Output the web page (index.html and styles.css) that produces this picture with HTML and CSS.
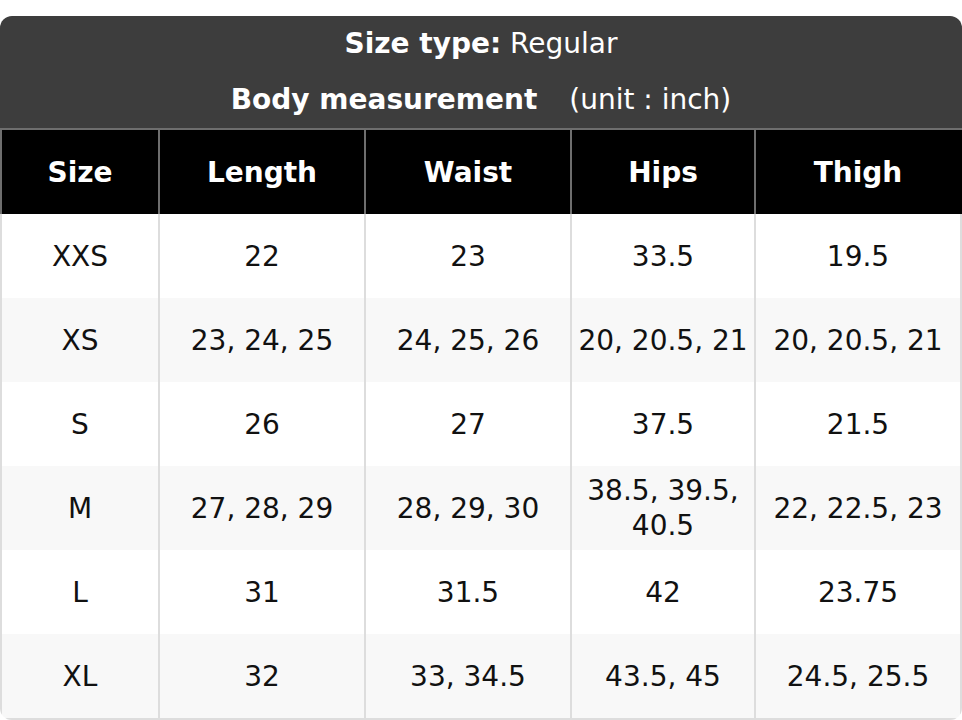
FILE: index.html
```html
<!DOCTYPE html>
<html>
<head>
<meta charset="utf-8">
<link rel="stylesheet" href="styles.css">
</head>
<body>
<div class="chart">
  <div class="caption">
    <div class="cap-line"><b>Size type:</b> Regular</div>
    <div class="cap-line"><b>Body measurement</b><span class="unit">(unit : inch)</span></div>
  </div>
  <table class="sizes">
    <colgroup>
      <col class="c-size"><col class="c-len"><col class="c-waist"><col class="c-hips"><col class="c-thigh">
    </colgroup>
    <thead>
      <tr><th>Size</th><th>Length</th><th>Waist</th><th>Hips</th><th>Thigh</th></tr>
    </thead>
    <tbody>
      <tr><td>XXS</td><td>22</td><td>23</td><td>33.5</td><td>19.5</td></tr>
      <tr><td>XS</td><td>23, 24, 25</td><td>24, 25, 26</td><td>20, 20.5, 21</td><td>20, 20.5, 21</td></tr>
      <tr><td>S</td><td>26</td><td>27</td><td>37.5</td><td>21.5</td></tr>
      <tr><td>M</td><td>27, 28, 29</td><td>28, 29, 30</td><td>38.5, 39.5, 40.5</td><td>22, 22.5, 23</td></tr>
      <tr><td>L</td><td>31</td><td>31.5</td><td>42</td><td>23.75</td></tr>
      <tr><td>XL</td><td>32</td><td>33, 34.5</td><td>43.5, 45</td><td>24.5, 25.5</td></tr>
    </tbody>
  </table>
</div>
</body>
</html>
```

FILE: styles.css
```css
html, body {
  margin: 0;
  padding: 0;
  background: #ffffff;
}
body {
  font-family: "DejaVu Sans", "Liberation Sans", sans-serif;
  font-size: 28px;
  color: #111111;
}
.chart {
  margin-top: 16px;
  width: 962px;
  border-radius: 12px;
  overflow: hidden;
}
.caption {
  background: #3d3d3d;
  color: #ffffff;
  text-align: center;
  border-bottom: 2px solid #6e6e6e;
}
.cap-line {
  height: 56px;
  line-height: 56px;
  white-space: nowrap;
}
.unit {
  margin-left: 32px;
}
.sizes {
  width: 962px;
  border-collapse: separate;
  border-spacing: 0;
  table-layout: fixed;
}
.c-size { width: 160px; }
.c-len { width: 206px; }
.c-waist { width: 206px; }
.c-hips { width: 184px; }
.c-thigh { width: 206px; }
.sizes th, .sizes td {
  box-sizing: border-box;
  height: 84px;
  padding: 0 4px;
  text-align: center;
  vertical-align: middle;
  line-height: 35px;
  font-weight: normal;
}
.sizes th {
  background: #000000;
  color: #ffffff;
  font-weight: bold;
  border-right: 2px solid #6e6e6e;
}
.sizes th:first-child {
  border-left: 2px solid #6e6e6e;
}
.sizes th:last-child {
  border-right-color: #000000;
}
.sizes td {
  border-right: 2px solid #dddddd;
}
.sizes td:first-child {
  border-left: 2px solid #dddddd;
}
.sizes tbody tr:nth-child(even) td {
  background: #f8f8f8;
}
.sizes tbody tr:last-child td {
  border-bottom: 2px solid #dddddd;
  height: 86px;
}
```
